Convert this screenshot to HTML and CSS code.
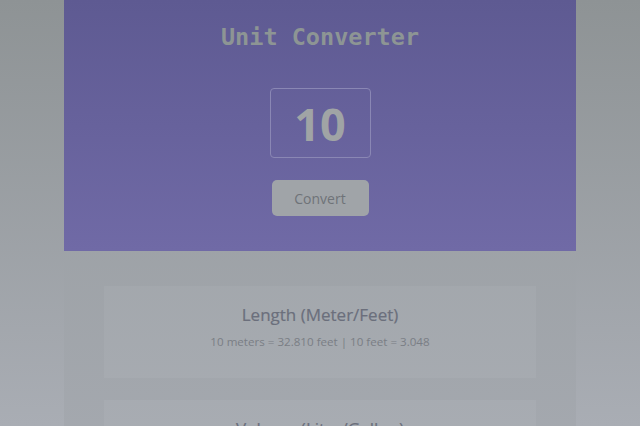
FILE: index.html
```html
<!DOCTYPE html>
<html>
<head>
<meta charset="utf-8">
<link rel="stylesheet" href="styles.css">
</head>
<body>
<div class="app">
  <header class="hero">
    <h1 class="title">Unit Converter</h1>
    <div class="value-box">10</div>
    <button class="convert-btn">Convert</button>
  </header>
  <main class="results">
    <section class="card">
      <h2 class="card-title">Length (Meter/Feet)</h2>
      <p class="card-text">10 meters = 32.810 feet | 10 feet = 3.048</p>
    </section>
    <section class="card">
      <h2 class="card-title">Volume (Liter/Gallon)</h2>
      <p class="card-text">10 liters = 2.642 gallons | 10 gallons = 37.854</p>
    </section>
  </main>
</div>
</body>
</html>
```
FILE: styles.css
```css
html, body {
  margin: 0;
  padding: 0;
  height: 100%;
}
body {
  background: linear-gradient(180deg, #8e9395 0%, #a9adb4 100%);
  font-family: "Open Sans", "Noto Sans", sans-serif;
  overflow: hidden;
}
.app {
  width: 512px;
  margin: 0 auto;
  min-height: 100%;
  background: linear-gradient(180deg, #969b9e 0%, #a7abb2 100%);
}
.hero {
  height: 251px;
  box-sizing: border-box;
  background: linear-gradient(180deg, #5e5a92 0%, #706aa6 100%);
  display: flex;
  flex-direction: column;
  align-items: center;
  padding-top: 22px;
}
.title {
  margin: 0;
  font-family: "DejaVu Sans Mono", monospace;
  font-weight: bold;
  font-size: 23.5px;
  line-height: 30px;
  color: #8d9594;
}
.value-box {
  margin-top: 36px;
  width: 99px;
  height: 68px;
  border: 1px solid #8a87b4;
  border-radius: 4px;
  display: flex;
  align-items: center;
  justify-content: center;
  font-family: "Open Sans", sans-serif;
  font-weight: bold;
  font-size: 45px;
  color: #a0a4a5;
}
.convert-btn {
  margin-top: 22px;
  width: 97px;
  height: 36px;
  border: none;
  border-radius: 5px;
  background: #a0a4a8;
  color: #6f7378;
  font-family: "Open Sans", sans-serif;
  font-size: 14px;
  padding: 0;
}
.results {
  padding: 35px 40px;
  display: flex;
  flex-direction: column;
  gap: 22px;
}
.card {
  background: rgba(255, 255, 255, 0.05);
  height: 92px;
  box-sizing: border-box;
  padding-top: 17px;
  text-align: center;
}
.card-title {
  margin: 0;
  font-size: 17px;
  font-weight: 500;
  line-height: 24px;
  color: #6b6f7c;
  -webkit-text-stroke: 0.2px #6b6f7c;
}
.card-text {
  margin: 7px 0 0;
  font-size: 11.6px;
  line-height: 16px;
  color: #7a7e85;
}
```
